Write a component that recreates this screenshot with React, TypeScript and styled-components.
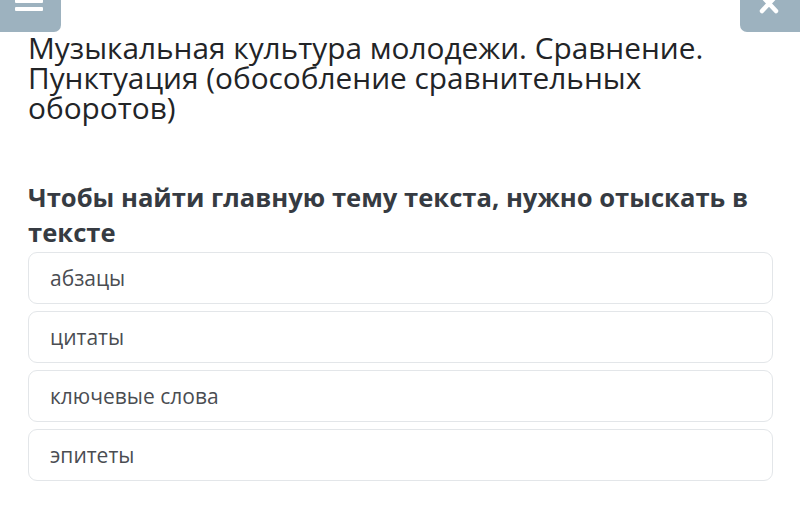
import React from 'react'
import styled, { createGlobalStyle } from 'styled-components'

const GlobalStyle = createGlobalStyle`
	html, body {
		margin: 0;
		padding: 0;
		background: #ffffff;
	}
	body {
		font-family: 'Open Sans', 'Noto Sans', sans-serif;
	}
`

const options = ['абзацы', 'цитаты', 'ключевые слова', 'эпитеты']

const App: React.FC = () => {
	return (
		<>
			<GlobalStyle />
			<Page>
				<TopBar>
					<CornerButton side="left" aria-label="menu">
						<svg width="28" height="14" viewBox="0 0 28 14">
							<rect x="0" y="0" width="28" height="4" rx="1" fill="#fff" />
							<rect x="0" y="8" width="28" height="4" rx="1" fill="#fff" />
						</svg>
					</CornerButton>
					<CornerButton side="right" aria-label="close">
						<svg width="20" height="16" viewBox="0 0 20 16">
							<path
								d="M3 -3 L17 12 M17 -3 L3 12"
								stroke="#fff"
								strokeWidth="4.5"
								strokeLinecap="round"
							/>
						</svg>
					</CornerButton>
				</TopBar>
				<Content>
					<Title>
						Музыкальная культура молодежи. Сравнение. Пунктуация
						(обособление сравнительных оборотов)
					</Title>
					<Question>
						Чтобы найти главную тему текста, нужно отыскать в тексте
					</Question>
					<OptionList>
						{options.map((o) => (
							<Option key={o}>{o}</Option>
						))}
					</OptionList>
				</Content>
			</Page>
		</>
	)
}

const Page = styled.div`
	width: 800px;
	height: 507px;
	overflow: hidden;
	background: #ffffff;
`

const TopBar = styled.div`
	display: flex;
	justify-content: space-between;
	height: 32px;
`

const CornerButton = styled.div<{ side: 'left' | 'right' }>`
	width: ${(p) => (p.side === 'left' ? 61 : 60)}px;
	height: 32px;
	background: #9db2bf;
	border-radius: ${(p) => (p.side === 'left' ? '0 0 7px 0' : '0 0 0 7px')};
	display: flex;
	align-items: flex-start;
	justify-content: center;
	box-sizing: border-box;
	overflow: hidden;
	svg {
		margin-top: -1px;
		margin-left: ${(p) => (p.side === 'left' ? -3 : -2)}px;
	}
`

const Content = styled.div`
	padding: 0 27px 0 28px;
`

const Title = styled.h1`
	margin: 1px 0 0;
	font-family: 'Open Sans', 'Noto Sans', sans-serif;
	font-weight: 400;
	font-size: 29.8px;
	line-height: 30px;
	color: #222427;
	padding-right: 60px;
`

const Question = styled.h2`
	margin: 57px 0 0;
	font-family: 'Open Sans', 'Noto Sans', sans-serif;
	font-weight: 700;
	font-size: 25.6px;
	line-height: 35px;
	color: #363b42;
`

const OptionList = styled.div`
	display: flex;
	flex-direction: column;
	gap: 7px;
	margin-top: 2px;
`

const Option = styled.div`
	height: 52px;
	box-sizing: border-box;
	border: 1.5px solid #e3e6e9;
	border-radius: 9px;
	display: flex;
	align-items: center;
	padding-left: 21px;
	font-size: 21px;
	color: #4a4d52;
	background: #ffffff;
`

export default App
